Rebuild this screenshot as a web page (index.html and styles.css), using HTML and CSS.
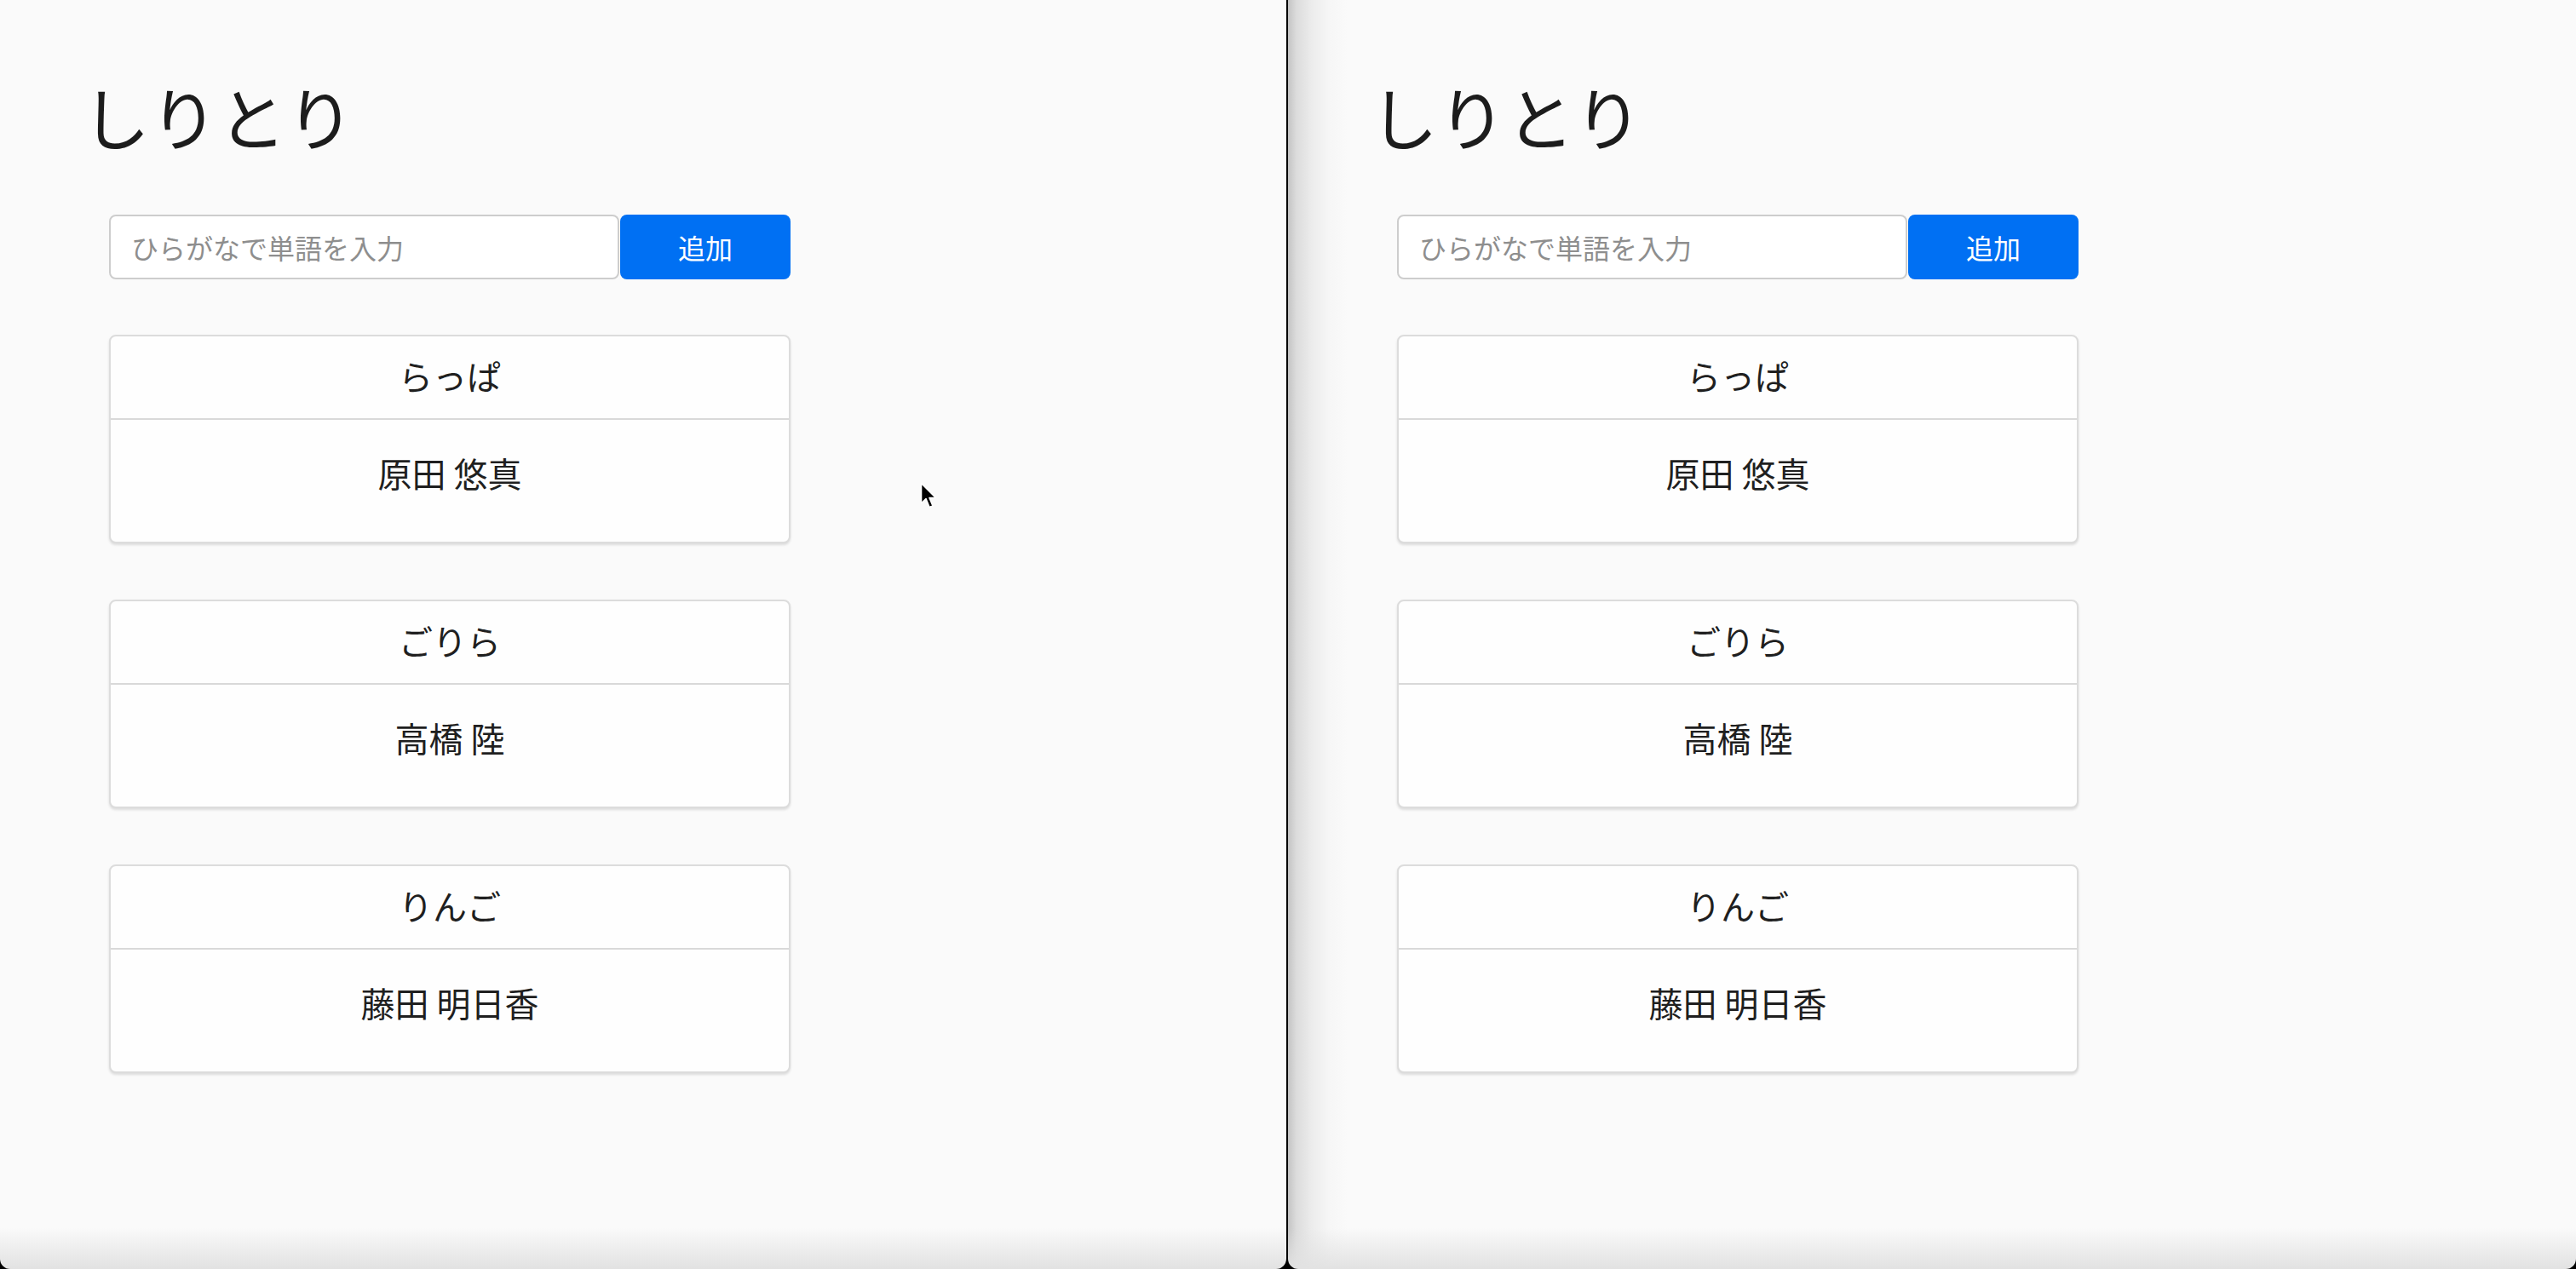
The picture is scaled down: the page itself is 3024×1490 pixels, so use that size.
FILE: index.html
```html
<!DOCTYPE html>
<html lang="ja">
<head>
<meta charset="utf-8">
<title>しりとり</title>
<link rel="stylesheet" href="styles.css">
</head>
<body>
<div class="desktop">
  <section class="pane pane-left">
    <main class="app">
      <h1 class="title">しりとり</h1>
      <div class="content">
        <form class="word-form">
          <input class="word-input" type="text" placeholder="ひらがなで単語を入力">
          <button class="add-btn" type="button">追加</button>
        </form>
        <ul class="cards">
          <li class="card"><div class="card-head">らっぱ</div><div class="card-body">原田 悠真</div></li>
          <li class="card"><div class="card-head">ごりら</div><div class="card-body">高橋 陸</div></li>
          <li class="card"><div class="card-head">りんご</div><div class="card-body">藤田 明日香</div></li>
        </ul>
      </div>
    </main>
    <svg class="cursor" width="22" height="34" viewBox="0 0 22 34" aria-hidden="true">
      <path d="M1.5 1.5 L1.5 25 L7 19.5 L11 29.5 L15 28 L11 18.5 L18.5 18.5 Z" fill="#000" stroke="#fff" stroke-width="1.6" stroke-linejoin="round"/>
    </svg>
  </section>
  <section class="pane pane-right">
    <main class="app">
      <h1 class="title">しりとり</h1>
      <div class="content">
        <form class="word-form">
          <input class="word-input" type="text" placeholder="ひらがなで単語を入力">
          <button class="add-btn" type="button">追加</button>
        </form>
        <ul class="cards">
          <li class="card"><div class="card-head">らっぱ</div><div class="card-body">原田 悠真</div></li>
          <li class="card"><div class="card-head">ごりら</div><div class="card-body">高橋 陸</div></li>
          <li class="card"><div class="card-head">りんご</div><div class="card-body">藤田 明日香</div></li>
        </ul>
      </div>
    </main>
  </section>
</div>
</body>
</html>
```
FILE: styles.css
```css
* { box-sizing: border-box; }

html, body {
  margin: 0;
  padding: 0;
  background: #000;
  height: 1490px;
  overflow: hidden;
}

body {
  font-family: "Noto Sans CJK JP", "Noto Sans", sans-serif;
  color: #1f1f1f;
}

.desktop {
  display: flex;
  gap: 2px;
  height: 1490px;
}

.pane {
  position: relative;
  height: 1490px;
  overflow: hidden;
  border-radius: 0 0 12px 12px;
  background-color: #fafafa;
  background-image: linear-gradient(to bottom, rgba(250,250,250,0) calc(100% - 48px), rgba(226,226,226,1) 100%);
}

.pane-left {
  width: 1510px;
  flex: none;
}

.pane-right {
  flex: 1;
  background-image:
    linear-gradient(to bottom, rgba(250,250,250,0) calc(100% - 48px), rgba(226,226,226,1) 100%),
    linear-gradient(to right, #c4c4c4 0, #dcdcdc 10px, #ececec 28px, #f6f6f6 48px, rgba(250,250,250,0) 70px);
}

.app {
  padding-left: 96px;
}

.title {
  margin: 87px 0 0;
  font-size: 80px;
  line-height: 96px;
  font-weight: 400;
  color: #1c1c1c;
}

.content {
  margin-left: 32px;
  width: 800px;
}

.word-form {
  display: flex;
  gap: 1px;
  margin: 69px 0 0;
}

.word-input {
  width: 599px;
  height: 76px;
  border: 2px solid #cdcdcd;
  border-radius: 8px;
  background: #fff;
  padding: 0 24px;
  font-family: inherit;
  font-size: 32px;
  color: #222;
  outline: none;
}

.word-input::placeholder {
  color: #8e8e8e;
}

.add-btn {
  flex: 1;
  height: 76px;
  border: none;
  border-radius: 8px;
  background: #0070f3;
  color: #fff;
  font-family: inherit;
  font-size: 32px;
  line-height: 1;
  padding: 0;
}

.cards {
  list-style: none;
  margin: 65px 0 0;
  padding: 0;
  display: flex;
  flex-direction: column;
  gap: 66px;
}

.card {
  border: 2px solid #dcdcdc;
  border-radius: 8px;
  background: #fefefe;
  box-shadow: 0 2px 3px rgba(0,0,0,0.12);
  text-align: center;
  font-size: 40px;
  line-height: 48px;
  color: #1f1f1f;
}

.card-head {
  padding: 22px 40px 26px;
  border-bottom: 2px solid #d9d9d9;
}

.card-body {
  padding: 38px 40px 57px;
}

.cursor {
  position: absolute;
  left: 1080px;
  top: 566px;
}
```
